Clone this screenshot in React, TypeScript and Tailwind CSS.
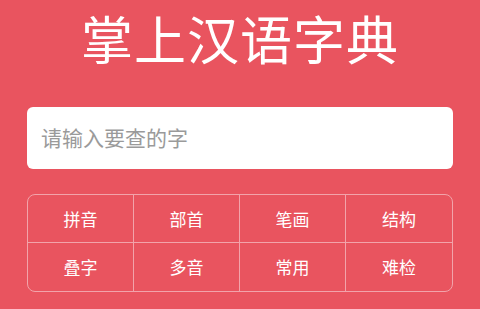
import React from "react";

const items = ["拼音", "部首", "笔画", "结构", "叠字", "多音", "常用", "难检"];

export default function App() {
  return (
    <div
      className="w-[480px] h-[309px] bg-[#e9545f] flex flex-col items-center overflow-hidden"
      style={{ fontFamily: '"Noto Sans CJK SC", "Noto Sans", sans-serif' }}
    >
      <h1 className="mt-[6px] text-[52px] leading-[64px] text-white font-normal tracking-[1px]">
        掌上汉语字典
      </h1>

      <div className="mt-[37px] w-[426px] h-[62px] bg-white rounded-[6px] flex items-center px-[14px]">
        <input
          className="w-full outline-none text-[21px] text-[#333] placeholder:text-[#9a9a9a] bg-transparent"
          placeholder="请输入要查的字"
        />
      </div>

      <div className="mt-[25px] w-[426px] h-[98px] border border-[#f2a3aa] rounded-[8px] grid grid-cols-4 grid-rows-2 overflow-hidden">
        {items.map((t, i) => (
          <div
            key={t}
            className={
              "flex items-center justify-center text-white text-[17px] border-[#f2a3aa] " +
              (i % 4 !== 3 ? "border-r " : "") +
              (i < 4 ? "border-b" : "")
            }
          >
            {t}
          </div>
        ))}
      </div>
    </div>
  );
}
